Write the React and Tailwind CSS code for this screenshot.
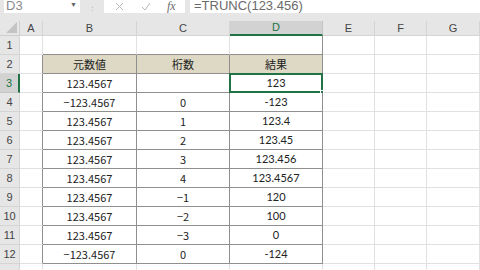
import React from "react";

const COLS = [
  { key: "A", w: "w-[23px]" },
  { key: "B", w: "w-[94px]" },
  { key: "C", w: "w-[93px]" },
  { key: "D", w: "w-[93px]" },
  { key: "E", w: "w-[52px]" },
  { key: "F", w: "w-[52px]" },
  { key: "G", w: "w-[53px]" },
];

const DATA = [
  ["123.4567", "", "123"],
  ["−123.4567", "0", "-123"],
  ["123.4567", "1", "123.4"],
  ["123.4567", "2", "123.45"],
  ["123.4567", "3", "123.456"],
  ["123.4567", "4", "123.4567"],
  ["123.4567", "−1", "120"],
  ["123.4567", "−2", "100"],
  ["123.4567", "−3", "0"],
  ["−123.4567", "0", "-124"],
];

const jp = "font-['Noto_Sans_CJK_JP',sans-serif]";
const lat = "font-['Lato','Noto_Sans_CJK_JP',sans-serif]";

function FormulaBar() {
  return (
    <div className="h-[21px] bg-[#e6e6e6] flex items-start font-['Liberation_Sans',sans-serif]">
      <div className="ml-[4px] w-[76px] h-[13px] bg-white flex items-end justify-between overflow-hidden">
        <span className="text-[13px] leading-none text-[#8a8a8a] pl-[2px] mb-[1px]">D3</span>
        <span className="text-[7px] text-[#666] mr-[3px] mb-[3px]">▼</span>
      </div>
      <div className="w-[24px] h-[13px] flex flex-col items-center justify-end gap-[2px] pb-[2px]">
        <span className="w-[1px] h-[1px] bg-[#bbb]" />
        <span className="w-[1px] h-[1px] bg-[#bbb]" />
      </div>
      <div className="w-[81px] h-[13px] bg-white flex items-end overflow-hidden">
        <span className="ml-[10px] w-[10px] h-[11px] flex items-center justify-center">
          <svg width="9" height="9" viewBox="0 0 9 9"><path d="M1 0 L8 7 M8 0 L1 7" stroke="#b8b8b8" strokeWidth="1" /></svg>
        </span>
        <span className="ml-[17px] w-[10px] h-[11px] flex items-center justify-center">
          <svg width="10" height="9" viewBox="0 0 10 9"><path d="M1 4 L4 7 L9 0" stroke="#b8b8b8" strokeWidth="1" fill="none" /></svg>
        </span>
        <span className="ml-[16px] text-[12px] italic font-['Liberation_Serif',serif] text-[#6c6c6c] leading-none mb-[1px]">fx</span>
      </div>
      <div className="ml-[5px] flex-1 h-[13px] bg-white flex items-end overflow-hidden">
        <span className="ml-[4px] text-[13px] leading-none text-[#6a6a6a] mb-[1px]">=TRUNC(123.456)</span>
      </div>
    </div>
  );
}

function HeaderRow() {
  return (
    <div className="flex h-[15px] bg-[#e6e6e6] font-['Liberation_Sans',sans-serif] text-[11px] text-[#444]">
      <div className="w-[20px] border-r border-b border-[#cfcfcf] relative">
        <svg className="absolute right-[2px] bottom-[2px]" width="11" height="11" viewBox="0 0 11 11">
          <path d="M11 0 L11 11 L0 11 Z" fill="#c4c4c4" />
        </svg>
      </div>
      {COLS.map((c) =>
        c.key === "D" ? (
          <div key={c.key} className={`${c.w} bg-[#d2d2d2] border-r border-[#c4c4c4] border-b-2 border-b-[#217346] text-[#217346] flex items-center justify-center`}>
            {c.key}
          </div>
        ) : (
          <div key={c.key} className={`${c.w} border-r border-b border-[#d4d4d4] flex items-center justify-center`}>
            {c.key}
          </div>
        )
      )}
    </div>
  );
}

function RowHead({ n, active }) {
  return active ? (
    <div className="w-[20px] bg-[#d2d2d2] border-b border-[#c4c4c4] border-r-2 border-r-[#217346] text-[#217346] flex items-center justify-center text-[11px] font-['Liberation_Sans',sans-serif]">
      {n}
    </div>
  ) : (
    <div className="w-[20px] bg-[#e6e6e6] border-b border-r border-[#d4d4d4] text-[#444] flex items-center justify-center text-[11px] font-['Liberation_Sans',sans-serif]">
      {n}
    </div>
  );
}

function Grid({ w }) {
  return <div className={`${w} border-r border-b border-[#e1e1e1]`} />;
}

export default function App() {
  const dark = "border-[#8f8f8f]";
  return (
    <div className="w-[480px] h-[270px] overflow-hidden bg-white">
      <FormulaBar />
      <HeaderRow />
      {/* row 1 */}
      <div className="flex h-[19px]">
        <RowHead n={1} />
        <Grid w="w-[23px]" />
        <div className={`w-[94px] border-r border-r-[#e1e1e1] border-b ${dark}`} />
        <div className={`w-[93px] border-r border-r-[#e1e1e1] border-b ${dark}`} />
        <div className={`w-[93px] border-r border-b ${dark}`} />
        <Grid w="w-[52px]" />
        <Grid w="w-[52px]" />
        <Grid w="w-[53px]" />
      </div>
      {/* row 2 table header */}
      <div className={`flex h-[19px] text-[11px] text-[#222] ${jp}`}>
        <RowHead n={2} />
        <div className={`w-[23px] border-b border-b-[#e1e1e1] border-r ${dark}`} />
        <div className={`w-[94px] bg-[#ddd9c4] border-r border-b ${dark} flex items-center justify-center`}>元数値</div>
        <div className={`w-[93px] bg-[#ddd9c4] border-r border-b ${dark} flex items-center justify-center`}>桁数</div>
        <div className={`w-[93px] bg-[#ddd9c4] border-r border-b ${dark} flex items-center justify-center`}>結果</div>
        <Grid w="w-[52px]" />
        <Grid w="w-[52px]" />
        <Grid w="w-[53px]" />
      </div>
      {DATA.map((r, i) => (
        <div key={i} className="flex h-[19px] text-[11px] text-[#222]">
          <RowHead n={i + 3} active={i === 0} />
          <div className={`w-[23px] border-b border-b-[#e1e1e1] border-r ${dark}`} />
          <div className={`w-[94px] border-r border-b ${dark} flex items-center justify-center ${jp}`}>{r[0]}</div>
          <div className={`w-[93px] border-r border-b ${dark} flex items-center justify-center ${jp}`}>{r[1]}</div>
          <div className={`w-[93px] border-r border-b ${dark} flex items-center justify-center ${lat} relative`}>
            {r[2]}
            {i === 0 && (
              <div className="absolute -left-[1px] -top-[1px] w-[94px] h-[20px] border-2 border-[#217346]">
                <div className="absolute -right-[3px] -bottom-[3px] w-[4px] h-[4px] bg-[#217346] border border-white" />
              </div>
            )}
          </div>
          <Grid w="w-[52px]" />
          <Grid w="w-[52px]" />
          <Grid w="w-[53px]" />
        </div>
      ))}
      <div className="flex h-[19px]">
        <RowHead n="" />
        <Grid w="w-[23px]" />
        <Grid w="w-[94px]" />
        <Grid w="w-[93px]" />
        <Grid w="w-[93px]" />
        <Grid w="w-[52px]" />
        <Grid w="w-[52px]" />
        <Grid w="w-[53px]" />
      </div>
    </div>
  );
}
